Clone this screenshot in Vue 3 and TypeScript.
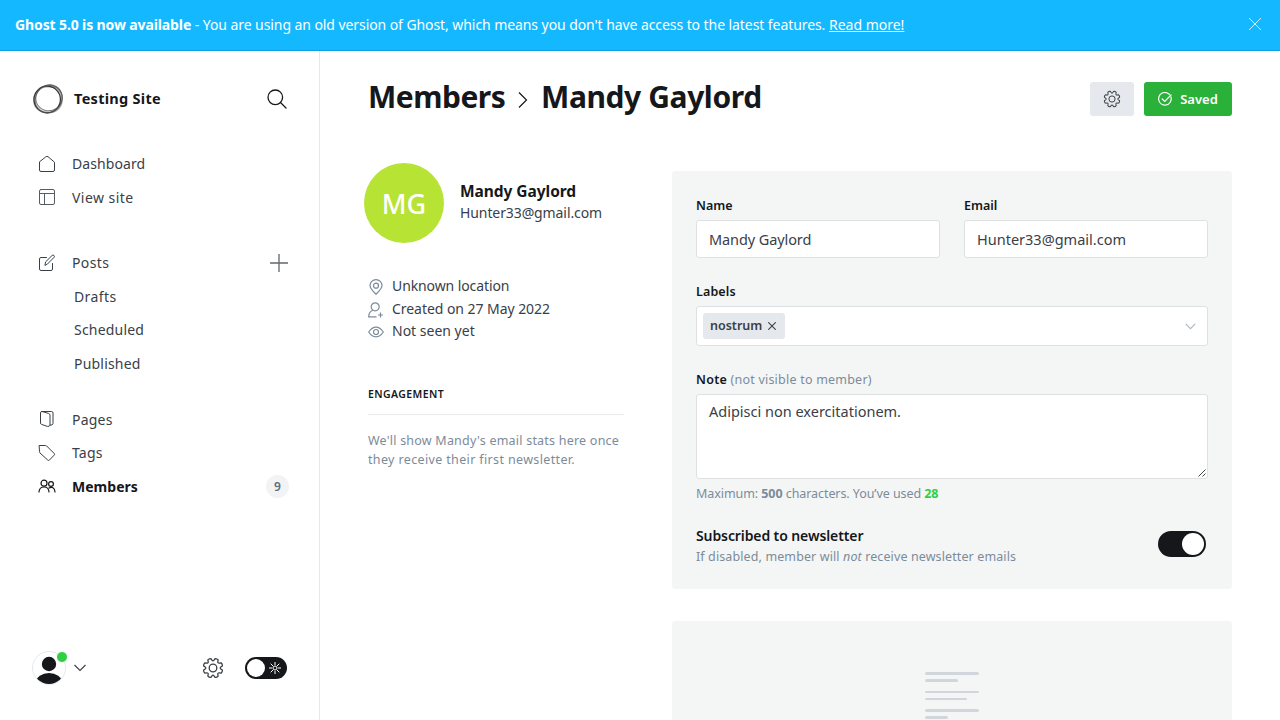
<script setup lang="ts">
import { ref } from 'vue'

interface NavItem {
  label: string
  icon?: string
  cls?: string
  count?: number
  add?: boolean
  sub?: boolean
  active?: boolean
}

const groups = ref<NavItem[][]>([
  [
    { label: 'Dashboard', icon: 'home', cls: 'dashboard' },
    { label: 'View site', icon: 'layout', cls: 'view' },
  ],
  [
    { label: 'Posts', icon: 'pen', cls: 'posts', add: true },
    { label: 'Drafts', cls: 'drafts', sub: true },
    { label: 'Scheduled', cls: 'scheduled', sub: true },
    { label: 'Published', cls: 'published', sub: true },
  ],
  [
    { label: 'Pages', icon: 'pages', cls: 'pages' },
    { label: 'Tags', icon: 'tag', cls: 'tags' },
    { label: 'Members', icon: 'members', cls: 'members', count: 9, active: true },
  ],
])

const name = ref('Mandy Gaylord')
const email = ref('Hunter33@gmail.com')
const note = ref('Adipisci non exercitationem.')

// Eight-toothed cog outline, centred on the origin
const gearPath = (() => {
  const pts: string[] = []
  for (let i = 0; i < 8; i++) {
    const at = (deg: number, r: number) => {
      const a = ((i * 45 + deg) * Math.PI) / 180
      return `${(r * Math.cos(a)).toFixed(2)} ${(r * Math.sin(a)).toFixed(2)}`
    }
    pts.push(`${i ? 'L' : 'M'}${at(-10, 9.6)}Q${at(0, 10.3)} ${at(10, 9.6)}L${at(15, 7.9)}Q${at(22.5, 6.6)} ${at(30, 7.9)}`)
  }
  return pts.join('') + 'Z'
})()
</script>

<template>
  <div class="page">
    <div class="banner">
      <p><b>Ghost 5.0 is now available</b> <span class="msg">- You are using an old version of Ghost, which means you don't have access to the latest features.</span> <a>Read more!</a></p>
      <svg width="14" height="14" viewBox="0 0 14 14" fill="none" stroke="#fff" stroke-width=".8"><path d="M1 1l12 12M13 1L1 13" /></svg>
    </div>
    <div class="body">
      <nav class="sidebar">
        <header class="site">
          <svg class="orb" width="32" height="32" viewBox="0 0 32 32" fill="none">
            <path fill="#777" fill-opacity=".55" fill-rule="evenodd" d="M16 1.500C24 0 31 7 31 16S25 30.500 16 30.500 1 25 1 17 8 2.500 16 1.500zM15.500 4.500C9 4.500 3.500 9 3.500 16.500S9 28.500 16 28.500 28 23 28.500 16 23 4 15.500 4.500z" />
            <ellipse cx="15.200" cy="16.500" rx="13.200" ry="13.300" stroke="#333" stroke-width="1.200" />
            <ellipse cx="17" cy="14.800" rx="12.800" ry="13.400" stroke="#444" stroke-opacity=".7" stroke-width="1" transform="rotate(55 17 14.800)" />
            <ellipse cx="16.600" cy="16.200" rx="14.200" ry="13" stroke="#555" stroke-opacity=".7" stroke-width="1" transform="rotate(-50 16.600 16.200)" />
          </svg>
          <b>Testing Site</b>
          <svg class="search" width="20" height="20" viewBox="0 0 20 20" fill="none" stroke="#15171a" stroke-width="1.300"><circle cx="8.300" cy="8.300" r="7.300" /><path d="M13.500 13.500L19 19" stroke-linecap="round" /></svg>
        </header>
        <ul v-for="(items, g) in groups" :key="g">
          <li v-for="item in items" :key="item.label" :class="[item.cls, { sub: item.sub, active: item.active }]">
            <svg v-if="item.icon" class="ico" width="18" height="18" viewBox="0 0 18 18" fill="none" stroke="currentColor" stroke-width="1" stroke-linejoin="round" stroke-linecap="round">
              <path v-if="item.icon === 'home'" d="M1.500 7.200V15q0 1.500 1.500 1.500h12q1.500 0 1.500-1.500V7.200L10 1.700q-1-.8-2 0z" />
              <path v-else-if="item.icon === 'layout'" d="M3 1.500h12q1.500 0 1.500 1.500v12q0 1.500-1.500 1.500H3q-1.500 0-1.500-1.500V3q0-1.500 1.500-1.500zM1.500 5.500h15M6.500 5.500v11" />
              <path v-else-if="item.icon === 'pen'" d="M8.500 3.500H3Q1.500 3.500 1.500 5v10q0 1.500 1.500 1.500h10q1.500 0 1.500-1.500V9.500M7 11l.6-3.100 6.600-6.500q.9-.7 1.800.1.800.9.100 1.800L9.600 9.900z" />
              <path v-else-if="item.icon === 'pages'" d="M3.500 1.500h10q1.500 0 1.500 1.500v10.500q0 1-1 1.300l-2 .4M3.500 1.500Q2.500 1.600 2.500 3v10q0 1 1 1.400l6 2q2 .3 2.500-1.200V5q0-1-1-1.400z" />
              <path v-else-if="item.icon === 'tag'" d="M1.500 1.500h6q.7 0 1.200.5l7.500 7.500q.8.800 0 1.600l-4.800 5q-.8.800-1.600 0L2 9Q1.500 8.400 1.500 7.700z" />
              <g v-else stroke-width="1.200"><circle cx="6" cy="6.200" r="3" /><circle cx="13" cy="7" r="2.400" /><path d="M1 15q.3-5 5-5t5 5M11 11q2-1.200 4-.2 1.800 1 2 4.200" /></g>
            </svg>
            <span class="lbl">{{ item.label }}</span>
            <svg v-if="item.add" class="plus" width="18" height="18" viewBox="0 0 18 18" fill="none" stroke="#62686f" stroke-width="1.300"><path d="M9 0v18M0 9h18" /></svg>
            <span v-if="item.count" class="count">{{ item.count }}</span>
          </li>
        </ul>
        <footer>
          <div class="user">
            <svg width="34" height="34" viewBox="0 0 34 34"><defs><clipPath id="face"><circle cx="17" cy="17" r="16" /></clipPath></defs><circle cx="17" cy="17" r="16.500" fill="#fff" stroke="#e5e8eb" /><g clip-path="url(#face)" fill="#15171a"><circle cx="17" cy="13" r="7.200" /><ellipse cx="17" cy="31" rx="13" ry="9" /></g></svg>
            <i class="online"></i>
          </div>
          <svg class="chev" width="12" height="8" viewBox="0 0 12 8" fill="none" stroke="#394047" stroke-width="1.100"><path d="M.5 1L6 6.500 11.500 1" /></svg>
          <svg class="gear" width="22" height="22" viewBox="-11 -11 22 22" fill="none" stroke="#394047" stroke-width="1.300" stroke-linejoin="round"><path :d="gearPath" transform="rotate(22.500)" /><circle r="3.800" /></svg>
          <div class="mode">
            <i></i>
            <svg width="12" height="12" viewBox="0 0 12 12" fill="none" stroke="#fff" stroke-width="1"><circle cx="6" cy="6" r="2" /><path d="M6 0v3M6 9v3M0 6h3M9 6h3M1.700 1.700L4 4M8 8l2.300 2.300M10.300 1.700L8 4M4 8l-2.300 2.300" /></svg>
          </div>
        </footer>
      </nav>

      <main>
        <header class="top">
          <h1>
            <span class="crumb">Members</span>
            <svg width="10" height="18" viewBox="0 0 10 18" fill="none" stroke="#15171a" stroke-width="1.200"><path d="M1 1.500L8.500 9 1 16.500" /></svg>
            <span class="who">{{ name }}</span>
          </h1>
          <button class="settings"><svg width="18" height="18" viewBox="-11 -11 22 22" fill="none" stroke="#394047" stroke-width="1.200" stroke-linejoin="round"><path :d="gearPath" transform="rotate(22.500)" /><circle r="3.800" /></svg></button>
          <button class="save"><svg width="14" height="14" viewBox="0 0 14 14" fill="none" stroke="#fff" stroke-width="1.200" stroke-linecap="round"><path d="M13 5q.7 2.800-.8 5.200A6.300 6.300 0 1 1 11.300 2.300M4.200 7l2.500 2.400L13 3" /></svg><span>Saved</span></button>
        </header>

        <div class="cols">
          <aside>
            <div class="profile">
              <div class="avatar">MG</div>
              <div class="id"><h3>{{ name }}</h3><p>{{ email }}</p></div>
            </div>
            <div class="facts">
              <p class="f1"><svg width="16" height="16" viewBox="0 0 16 16" fill="none" stroke="#7c8b9a" stroke-width="1.200"><path d="M8 15.200Q2 9.500 2 6.500a6 5.900 0 0 1 12 0Q14 9.500 8 15.200z" /><circle cx="8" cy="6.700" r="2.500" /></svg><span>Unknown location</span></p>
              <p class="f2"><svg width="16" height="16" viewBox="0 0 16 16" fill="none" stroke="#7c8b9a" stroke-width="1.200"><circle cx="7.200" cy="4.800" r="4" /><path d="M4.700 8.300Q.7 10 .7 14.800H8.500M12.500 10.500v5M10 13h5" /></svg><span>Created on 27 May 2022</span></p>
              <p class="f3"><svg width="16" height="16" viewBox="0 0 16 16" fill="none" stroke="#7c8b9a" stroke-width="1.200"><path d="M.7 8Q4 3.100 8 3.100T15.300 8Q12 12.900 8 12.900T.7 8z" /><circle cx="8" cy="8" r="2.500" /></svg><span>Not seen yet</span></p>
            </div>
            <h4>Engagement</h4>
            <p class="stats"><span>We'll show Mandy's email stats here once</span><br /><span class="second">they receive their first newsletter.</span></p>
          </aside>

          <div class="panels">
            <section class="card">
              <div class="pair">
                <div><label class="l-name">Name</label><div class="field"><span class="v-name">{{ name }}</span></div></div>
                <div><label class="l-email">Email</label><div class="field"><span class="v-email">{{ email }}</span></div></div>
              </div>
              <label class="l-labels">Labels</label>
              <div class="field select">
                <span class="chip"><span>nostrum</span><svg width="8" height="8" viewBox="0 0 8 8" stroke="#394047" stroke-width="1.100"><path d="M.3.300l7.400 7.400M7.700.300L.3 7.700" /></svg></span>
                <svg width="11" height="7" viewBox="0 0 11 7" fill="none" stroke="#aeb7c1" stroke-width="1.100"><path d="M.7.800l4.800 4.900L10.300.8" /></svg>
              </div>
              <label class="l-note"><b>Note</b> <span>(not visible to member)</span></label>
              <div class="field area"><span>{{ note }}</span><svg width="8" height="8" viewBox="0 0 8 8" stroke="#444" stroke-width="1"><path d="M.5 7.500l7-7M4.500 7.500l3-3" /></svg></div>
              <p class="hint max">Maximum: <b>500</b> characters. You’ve used <b class="used">{{ note.length }}</b></p>
              <div class="news">
                <div><h5>Subscribed to newsletter</h5><p class="hint dis">If disabled, member will <em>not</em> receive newsletter emails</p></div>
                <div class="switch"><i></i></div>
              </div>
            </section>
            <section class="card empty">
              <i class="w54"></i><i class="w33"></i><i class="w54"></i><i class="w42"></i><i class="w54"></i><i class="w23"></i>
            </section>
          </div>
        </div>
      </main>
    </div>
  </div>
</template>

<style>
body { margin: 0; overflow: hidden; }
</style>

<style scoped>
.page { width: 1280px; height: 720px; overflow: hidden; display: flex; flex-direction: column; background: #fff; color: #15171a; font-family: "Noto Sans", "Open Sans", sans-serif; font-size: 14px; box-sizing: border-box; }
.page * { box-sizing: border-box; }
p, h1, h3, h4, h5, ul { margin: 0; padding: 0; font-weight: 400; }
span, b, a, label { white-space: nowrap; }
svg { flex: none; display: block; }
.banner { height: 51px; flex: none; background: #14b8ff; border-bottom: 1px solid #0f9fe0; color: #fff; display: flex; align-items: center; justify-content: space-between; padding: 0 18px 2px 15px; }
.banner p { font-size: 14px; white-space: nowrap; }
.banner b { letter-spacing: -.12px; }
.msg { letter-spacing: -.075px; }
.banner a { text-decoration: underline; }
.body { flex: 1; min-height: 0; display: flex; }
.sidebar { width: 320px; flex: none; border-right: 1px solid #e5e8eb; display: flex; flex-direction: column; padding-top: 32px; }
.site { display: flex; align-items: center; height: 32px; padding: 0 32px; margin-bottom: 32px; }
.orb { margin-top: -1px; }
.site b { margin: -2px 0 0 10px; flex: 1; font-size: 14.500px; letter-spacing: .28px; }
ul { list-style: none; margin-bottom: 32px; }
ul:nth-of-type(2) { margin-bottom: 22.700px; }
li { height: 33.500px; display: flex; align-items: center; padding: 0 30px 0 38px; color: #394047; font-size: 14px; letter-spacing: .2px; }
li.view, li.posts { letter-spacing: .45px; }
li.posts { padding-right: 31px; letter-spacing: .4px; }
li.dashboard { letter-spacing: .08px; }
li.members { letter-spacing: .02px; }
li.drafts { letter-spacing: .4px; }
li .lbl { margin-left: 16px; flex: 1; }
li.sub .lbl { margin-left: 36px; }
li.active { color: #15171a; }
li.active .lbl { font-weight: 700; }
li.view .ico { opacity: .85; }
.count { width: 23px; height: 23px; border-radius: 50%; background: #f1f3f5; color: #626d79; font-size: 12px; font-weight: 600; text-align: center; line-height: 23px; }
footer { margin-top: auto; height: 34px; margin-bottom: 35px; padding: 0 32px; display: flex; align-items: center; }
.user { position: relative; }
.online { position: absolute; width: 12px; height: 12px; right: -2px; top: 0; border: 1px solid #fff; border-radius: 50%; background: #30cf43; }
.chev { margin-left: 8px; }
.gear { margin-left: auto; margin-right: 21px; }
.mode { width: 42px; height: 22px; border-radius: 11px; background: #15171a; display: flex; align-items: center; justify-content: space-between; padding: 0 6px 0 2px; }
.mode i { width: 18px; height: 18px; border-radius: 50%; background: #fff; }

main { flex: 1; padding: 0 48px; min-width: 0; }
.top { display: flex; align-items: center; height: 34px; margin-top: 31px; }
h1 { flex: 1; display: flex; align-items: center; font-size: 30px; font-weight: 700; line-height: 34px; margin-top: -5px; letter-spacing: -.4px; }
h1 .crumb { width: 137px; letter-spacing: -.5px; }
h1 svg { margin: 7px 13px 0 13px; }
button { height: 34px; border: 0; border-radius: 3px; display: flex; align-items: center; justify-content: center; padding: 0; font-family: inherit; }
.settings { width: 44px; background: #e5e9ed; margin-right: 10px; }
.save { width: 88px; background: #2ab13a; color: #fff; font-size: 13px; font-weight: 600; gap: 8px; }
.cols { display: flex; gap: 48px; margin-top: 55px; }
aside { width: 256px; flex: none; }
.profile { display: flex; align-items: center; gap: 16px; margin: -8px 0 0 -4px; height: 80px; }
.avatar { width: 80px; height: 80px; flex: none; border-radius: 50%; background: #b6e334; color: #fff; font-size: 27px; font-weight: 500; display: flex; align-items: center; justify-content: center; }
.id { margin-top: -2px; }
h3 { font-size: 15.500px; font-weight: 700; line-height: 22px; white-space: nowrap; letter-spacing: -.05px; }
.id p { color: #394047; line-height: 22px; white-space: nowrap; letter-spacing: -.1px; }
.facts { margin-top: 31px; color: #394047; }
.facts p { height: 22.500px; display: flex; align-items: center; gap: 8px; }
.facts svg { margin-top: 3px; }
.f1 { letter-spacing: -.1px; }
.facts .f2 { letter-spacing: -.05px; padding-top: 1px; }
h4 { margin-top: 44px; height: 29px; border-bottom: 1px solid #e9ebed; font-size: 10.500px; font-weight: 600; text-transform: uppercase; line-height: 16px; letter-spacing: .4px; }
.stats { margin-top: 16px; font-size: 12.500px; line-height: 19px; color: #7c8b9a; letter-spacing: .22px; }
.second { letter-spacing: .36px; }
.panels { flex: 1; min-width: 0; }
.card { background: #f4f6f6; border-radius: 3px; padding: 25px 24px 24px; height: 418px; color: #15171a; }
.pair { display: grid; grid-template-columns: 1fr 1fr; gap: 24px; margin-bottom: 24px; }
label { display: block; font-size: 12.500px; font-weight: 600; line-height: 20px; margin-bottom: 4px; }
.l-labels { letter-spacing: .12px; }
.l-note { margin-top: 24px; }
.l-note b { font-weight: 600; letter-spacing: .3px; }
.l-note span { color: #7c8b9a; font-weight: 400; letter-spacing: .22px; }
.field { height: 38px; border: 1px solid #dde1e2; border-radius: 3px; background: #fff; color: #394047; font-size: 14.500px; padding: 0 12px; display: flex; align-items: center; }
.v-name { letter-spacing: -.1px; }
.select { height: 40px; padding: 0 11px 0 6px; justify-content: space-between; }
.chip { height: 26px; width: 82px; border-radius: 3px; background: #e5e9ed; font-size: 12.500px; font-weight: 600; display: flex; align-items: center; justify-content: space-between; padding: 0 9px 0 7px; }
.chip span { margin-top: -2px; }
.area { height: 85px; align-items: flex-start; justify-content: space-between; padding: 6px 1px 1px 12px; line-height: 20px; }
.area svg { align-self: flex-end; }
.hint { font-size: 12.500px; line-height: 19px; color: #7c8b9a; white-space: nowrap; }
.max { margin-top: 5px; letter-spacing: -.07px; }
.used { color: #30cf43; }
.news { display: flex; justify-content: space-between; margin-top: 23px; padding-right: 2px; }
h5 { font-size: 14px; font-weight: 600; line-height: 20px; white-space: nowrap; letter-spacing: -.1px; }
.dis { line-height: 21px; letter-spacing: .11px; }
.switch { width: 48px; height: 26px; border-radius: 13px; background: #15171a; padding: 2px; display: flex; justify-content: flex-end; margin-top: 5px; }
.switch i { width: 22px; height: 22px; border-radius: 50%; background: #fff; }
.empty { margin-top: 32px; padding: 51px 0 0 253px; display: flex; flex-direction: column; }
.empty i { height: 2.500px; border-radius: 2px; background: #d0d6dc; flex: none; margin-bottom: 4.500px; }
.empty i:nth-child(even) { margin-bottom: 9px; }
.w54 { width: 54px; } .w33 { width: 33px; } .w42 { width: 42px; } .w23 { width: 23px; }
</style>
